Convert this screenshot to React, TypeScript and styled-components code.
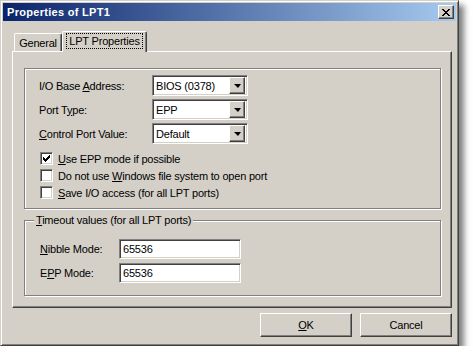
import React from "react";
import styled, { createGlobalStyle } from "styled-components";

const GlobalStyle = createGlobalStyle`
  html, body { margin: 0; padding: 0; background: #ffffff; }
  body {
    font-family: "Liberation Sans", Arial, sans-serif;
    font-size: 11px;
    letter-spacing: -0.2px;
    color: #000;
  }
  * { box-sizing: border-box; }
`;

const FACE = "#D4D0C8";

const Window = styled.div`
  width: 459px;
  height: 346px;
  background: ${FACE};
  border: 1px solid;
  border-color: ${FACE} #404040 #404040 ${FACE};
  box-shadow: inset 1px 1px 0 #fff, inset -1px -1px 0 #808080,
    5px 5px 6px rgba(0, 0, 0, 0.5);
  padding: 2px;
  display: flex;
  flex-direction: column;
`;

const TitleBar = styled.div`
  height: 18px;
  background: linear-gradient(to right, #0a246a, #a6caf0);
  display: flex;
  align-items: center;
  justify-content: space-between;
  padding: 0 2px 0 4px;
  color: #fff;
  font-weight: bold;
  font-size: 11px;
  letter-spacing: 0.3px;
`;

const Raised = styled.div`
  background: ${FACE};
  border: 1px solid;
  border-color: #fff #404040 #404040 #fff;
  box-shadow: inset -1px -1px 0 #808080;
`;

const CloseButton = styled(Raised)`
  width: 16px;
  height: 14px;
  display: flex;
  align-items: center;
  justify-content: center;
`;

const Body = styled.div`
  display: flex;
  flex-direction: column;
  padding: 10px 3px 0 9px;
`;

const TabStrip = styled.div`
  display: flex;
  align-items: flex-end;
  height: 20px;
  padding-left: 2px;
  position: relative;
  z-index: 1;
`;

const Tab = styled.div<{ $active?: boolean; $w: number }>`
  width: ${(p) => p.$w}px;
  height: ${(p) => (p.$active ? "21px" : "18px")};
  margin-bottom: ${(p) => (p.$active ? "-1px" : "0")};
  padding-top: ${(p) => (p.$active ? "2px" : "3px")};
  display: flex;
  justify-content: center;
  align-items: flex-start;
  background: ${FACE};
  border-top: 1px solid #fff;
  border-left: 1px solid #fff;
  border-right: 1px solid #404040;
  box-shadow: inset -1px 0 0 #808080;
  border-radius: 2px 2px 0 0;
  line-height: 13px;
  white-space: nowrap;
`;

const Focus = styled.span`
  display: inline-block;
  outline: 1px dotted #000;
  padding: 0 2px;
  line-height: 14px;
`;

const Panel = styled.div`
  width: 440px;
  height: 257px;
  border: 1px solid;
  border-color: #fff #404040 #404040 #fff;
  box-shadow: inset -1px -1px 0 #808080;
  padding: 16px 9px 0 11px;
  display: flex;
  flex-direction: column;
  gap: 11px;
`;

const Group = styled.div<{ $h: number }>`
  position: relative;
  height: ${(p) => p.$h}px;
  border: 1px solid #808080;
  box-shadow: inset 1px 1px 0 #fff, 1px 1px 0 #fff;
  margin-right: 1px;
`;

const GroupInner = styled.div<{ $top: number; $left: number; $gap: number }>`
  display: flex;
  flex-direction: column;
  padding: ${(p) => p.$top}px 0 0 ${(p) => p.$left}px;
  gap: ${(p) => p.$gap}px;
`;

const Legend = styled.span`
  position: absolute;
  top: -8px;
  left: 9px;
  padding: 0 2px;
  background: ${FACE};
  line-height: 14px;
`;

const FieldRow = styled.div<{ $labelW: number; $h: number }>`
  display: grid;
  grid-template-columns: ${(p) => p.$labelW}px auto;
  align-items: center;
  height: ${(p) => p.$h}px;
`;

const Sunken = styled.div`
  background: #fff;
  border: 1px solid;
  border-color: #808080 #fff #fff #808080;
  box-shadow: inset 1px 1px 0 #404040, inset -1px -1px 0 ${FACE};
`;

const Combo = styled(Sunken)`
  width: 96px;
  height: 21px;
  display: flex;
  align-items: center;
  padding: 2px 2px 2px 3px;
  justify-content: space-between;
`;

const DropButton = styled(Raised)`
  width: 16px;
  height: 17px;
  display: flex;
  align-items: center;
  justify-content: center;
`;

const Arrow = styled.span`
  width: 0;
  height: 0;
  border-left: 4px solid transparent;
  border-right: 3px solid transparent;
  border-top: 4px solid #000;
`;

const Edit = styled(Sunken)`
  width: 122px;
  height: 20px;
  display: flex;
  align-items: center;
  padding: 0 3px;
`;

const ChecksList = styled.div`
  display: flex;
  flex-direction: column;
  margin-top: 3px;
  margin-left: 1px;
`;

const CheckRow = styled.div`
  display: flex;
  align-items: center;
  gap: 5px;
  height: 17px;
`;

const CheckBox = styled(Sunken)`
  width: 13px;
  height: 13px;
  display: flex;
  align-items: center;
  justify-content: center;
`;

const Footer = styled.div`
  display: flex;
  justify-content: flex-end;
  gap: 8px;
  margin-top: 5px;
  padding-right: 1px;
`;

const Button = styled(Raised)`
  width: 92px;
  height: 24px;
  display: flex;
  align-items: center;
  justify-content: center;
`;

const Check = ({ checked, children }: { checked?: boolean; children: React.ReactNode }) => (
  <CheckRow>
    <CheckBox>
      {checked && (
        <svg width="7" height="7" viewBox="0 0 7 7" shapeRendering="crispEdges">
          <path d="M0 2h1v1h1v1h1v-1h1v-1h1v-1h1v-1h1v3h-1v1h-1v1h-1v1h-1v1h-1v-1h-1v-1h-1v-1h-1z" fill="#000" />
        </svg>
      )}
    </CheckBox>
    <span>{children}</span>
  </CheckRow>
);

const ComboField = ({ value }: { value: string }) => (
  <Combo>
    <span>{value}</span>
    <DropButton>
      <Arrow />
    </DropButton>
  </Combo>
);

export default function App() {
  return (
    <>
      <GlobalStyle />
      <Window>
        <TitleBar>
          <span>Properties of LPT1</span>
          <CloseButton>
            <svg width="8" height="7" viewBox="0 0 8 7" shapeRendering="crispEdges">
              <path
                d="M0 0h2v1h1v1h2v-1h1v-1h2v1h-1v1h-1v1h-1v1h1v1h1v1h1v1h-2v-1h-1v-1h-2v1h-1v1h-2v-1h1v-1h1v-1h1v-1h-1v-1h-1v-1h-1z"
                fill="#000"
              />
            </svg>
          </CloseButton>
        </TitleBar>
        <Body>
          <TabStrip>
            <Tab $w={48}>General</Tab>
            <Tab $active $w={85}>
              <Focus>LPT Properties</Focus>
            </Tab>
          </TabStrip>
          <Panel>
            <Group $h={141}>
              <GroupInner $top={6} $left={14} $gap={3}>
                <FieldRow $labelW={113} $h={21}>
                  <span>
                    I/O Base <u>A</u>ddress:
                  </span>
                  <ComboField value="BIOS (0378)" />
                </FieldRow>
                <FieldRow $labelW={113} $h={21}>
                  <span>
                    Port T<u>y</u>pe:
                  </span>
                  <ComboField value="EPP" />
                </FieldRow>
                <FieldRow $labelW={113} $h={21}>
                  <span>
                    <u>C</u>ontrol Port Value:
                  </span>
                  <ComboField value="Default" />
                </FieldRow>
                <ChecksList>
                  <Check checked>
                    <u>U</u>se EPP mode if possible
                  </Check>
                  <Check>
                    Do not use <u>W</u>indows file system to open port
                  </Check>
                  <Check>
                    <u>S</u>ave I/O access (for all LPT ports)
                  </Check>
                </ChecksList>
              </GroupInner>
            </Group>
            <Group $h={76}>
              <Legend>
                <u>T</u>imeout values (for all LPT ports)
              </Legend>
              <GroupInner $top={18} $left={15} $gap={4}>
                <FieldRow $labelW={79} $h={20}>
                  <span>
                    <u>N</u>ibble Mode:
                  </span>
                  <Edit>65536</Edit>
                </FieldRow>
                <FieldRow $labelW={79} $h={20}>
                  <span>
                    E<u>P</u>P Mode:
                  </span>
                  <Edit>65536</Edit>
                </FieldRow>
              </GroupInner>
            </Group>
          </Panel>
          <Footer>
            <Button>
              <span>
                <u>O</u>K
              </span>
            </Button>
            <Button>Cancel</Button>
          </Footer>
        </Body>
      </Window>
    </>
  );
}
